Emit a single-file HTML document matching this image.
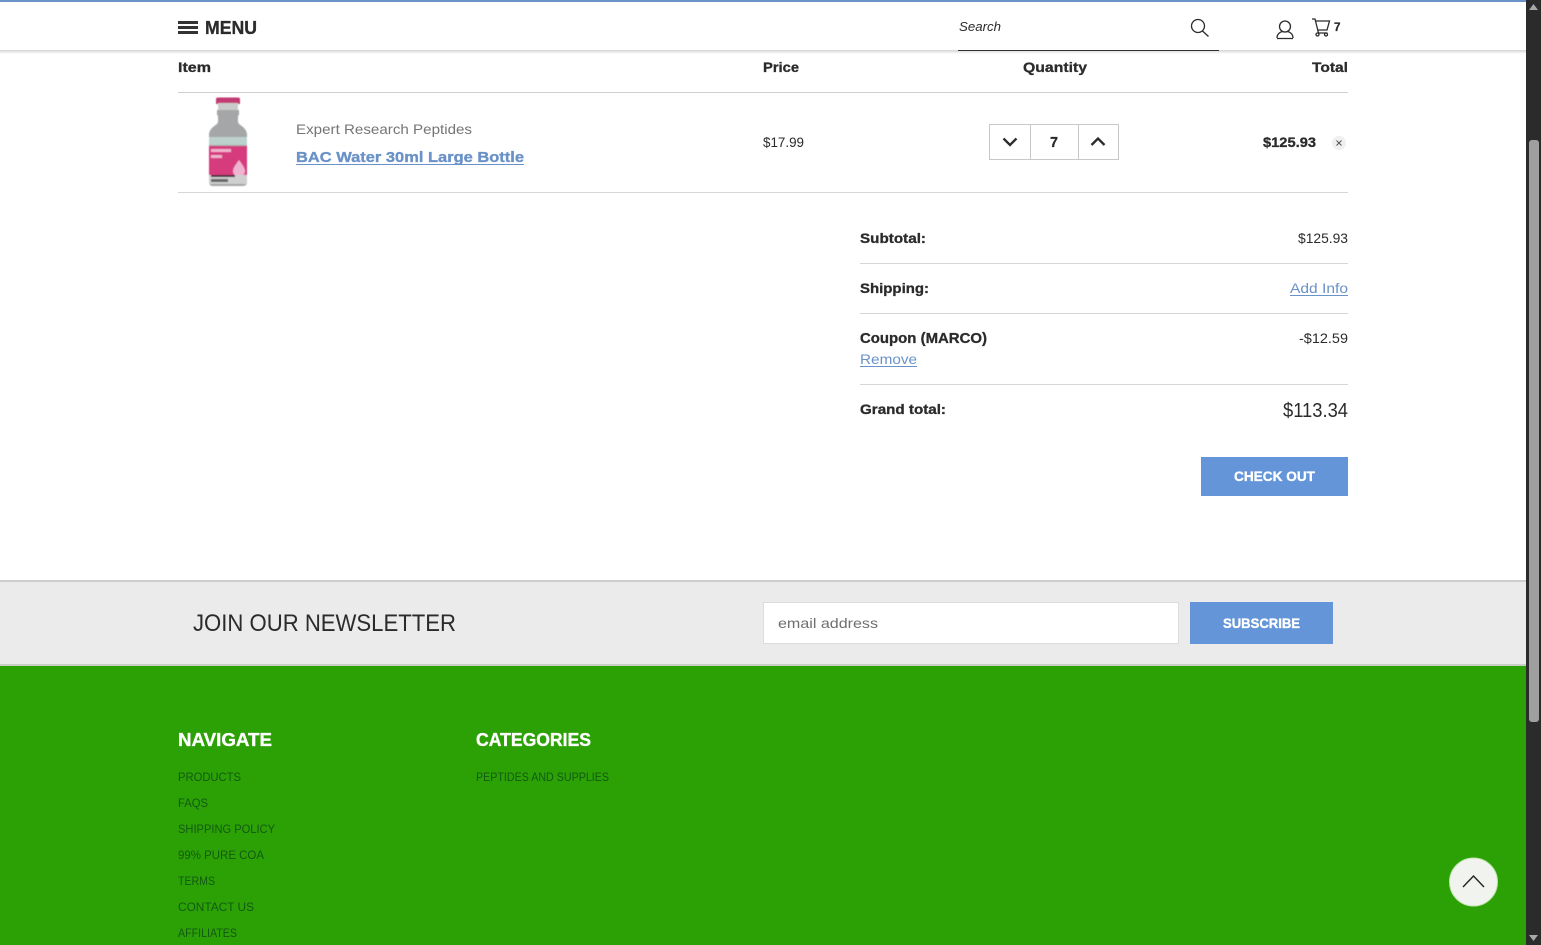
<!DOCTYPE html>
<html><head><meta charset="utf-8"><title>Cart</title>
<style>
html,body{margin:0;padding:0;background:#fff;overflow:hidden}
svg{display:block}
text{font-family:"Liberation Sans",sans-serif;fill:#2b2b2b}
.b{font-weight:700;stroke:#2b2b2b;stroke-width:.3}
.l{fill:#6a92c8}
.bl{font-weight:700;fill:#6a92c8;stroke:#6a92c8;stroke-width:.35}
.g{fill:#125a12}
.w{fill:#fff;font-weight:700;stroke:#fff;stroke-width:.35}
</style></head><body>
<svg width="1541" height="945" viewBox="0 0 1541 945" xmlns="http://www.w3.org/2000/svg">
<defs>
<linearGradient id="sh" x1="0" y1="0" x2="0" y2="1"><stop offset="0" stop-color="#d4d4d4"/><stop offset="1" stop-color="#fff"/></linearGradient>
<filter id="bl" x="-10%" y="-10%" width="120%" height="120%"><feGaussianBlur stdDeviation="0.6"/></filter>
</defs>
<rect width="1541" height="945" fill="#fff"/>
<!-- header -->
<rect x="0" y="0" width="1526" height="2" fill="#6a93c9"/>
<rect x="0" y="50" width="1526" height="4" fill="url(#sh)"/>
<rect x="178" y="21" width="20" height="3" fill="#333"/><rect x="178" y="26" width="20" height="3" fill="#333"/><rect x="178" y="31" width="20" height="3" fill="#333"/>
<text class="b" x="205" y="34" font-size="18" textLength="52" lengthAdjust="spacingAndGlyphs">MENU</text>
<text x="959" y="31" font-size="13" font-style="italic" textLength="42" lengthAdjust="spacingAndGlyphs">Search</text>
<rect x="958" y="50" width="261" height="1" fill="#333"/>
<g fill="none" stroke="#2b2b2b" stroke-width="1.300">
<circle cx="1198" cy="26" r="6.500"/><path d="M1202.500 31l6 5.500"/>
<circle cx="1285" cy="26.500" r="5.500"/><path d="M1277 38c0-4 3-6 5.500-6.500M1293 38c0-4-3-6-5.500-6.500M1277 38.500h16"/>
<path d="M1312 19h3l3.500 14h9M1315.500 21h14l-2.500 9h-9.500"/><circle cx="1317.500" cy="34.500" r="1.500"/><circle cx="1326" cy="34.500" r="1.500"/>
</g>
<text class="b" x="1334" y="31" font-size="12" textLength="6.500" lengthAdjust="spacingAndGlyphs">7</text>
<!-- table head -->
<text class="b" x="178" y="72" font-size="14" textLength="33" lengthAdjust="spacingAndGlyphs">Item</text>
<text class="b" x="763" y="72" font-size="14" textLength="36" lengthAdjust="spacingAndGlyphs">Price</text>
<text class="b" x="1023" y="72" font-size="14" textLength="64" lengthAdjust="spacingAndGlyphs">Quantity</text>
<text class="b" x="1312" y="72" font-size="14" textLength="36" lengthAdjust="spacingAndGlyphs">Total</text>
<rect x="178" y="92" width="1170" height="1" fill="#cfcfcf"/>
<rect x="178" y="192" width="1170" height="1" fill="#d6d6d6"/>
<!-- bottle -->
<g filter="url(#bl)">
<path d="M216 99q0-1.500 2-1.500h20q2 0 2 1.500v5h-24z" fill="#c33a73"/>
<rect x="218" y="103" width="20" height="7" fill="#c9cbcb"/>
<path d="M217 110h22v5l-1 1v6c0 3 9 5 9 13v47c0 3-2 4-4 4h-30c-2 0-4-1-4-4v-47c0-8 9-10 9-13v-6l-1-1z" fill="#a4a6a7"/>
<rect x="209" y="137" width="38" height="8" fill="#bcd0cc"/>
<rect x="209" y="146" width="38" height="29" fill="#d63a7e"/>
<rect x="211" y="149" width="20" height="3" fill="#eeb3cd"/>
<rect x="211" y="155" width="11" height="3" fill="#eeb3cd"/>
<path d="M239 160c3 4 6 8 6 11a6 6 0 0 1-12 0c0-3 3-7 6-11z" fill="#f0b3d0"/>
<rect x="209" y="175" width="38" height="9" fill="#cfcfcf"/>
<rect x="211" y="175" width="24" height="2" fill="#44303c"/>
<rect x="211" y="179" width="17" height="3" fill="#666"/>
</g>
<!-- item row -->
<text x="296" y="134" font-size="14" style="fill:#757575" textLength="176" lengthAdjust="spacingAndGlyphs">Expert Research Peptides</text>
<text class="bl" x="296" y="162" font-size="15" textLength="228" lengthAdjust="spacingAndGlyphs">BAC Water 30ml Large Bottle</text>
<rect x="296" y="164" width="228" height="1" fill="#6a92c8"/>
<text x="763" y="147" font-size="14" textLength="41" lengthAdjust="spacingAndGlyphs">$17.99</text>
<rect x="989.500" y="124.500" width="129" height="35" fill="#fff" stroke="#c8c8c8"/>
<path d="M1030.500 124v36M1078.500 124v36" stroke="#c8c8c8" fill="none"/>
<path d="M1003.500 138.500l6.500 6.500 6.500-6.500M1091.500 145l6.500-6.500 6.500 6.500" fill="none" stroke="#2b2b2b" stroke-width="2.300"/>
<text class="b" x="1050" y="147" font-size="15" textLength="8" lengthAdjust="spacingAndGlyphs">7</text>
<text class="b" x="1263" y="147" font-size="14" textLength="53" lengthAdjust="spacingAndGlyphs">$125.93</text>
<circle cx="1339" cy="143" r="7" fill="#f0f0f0"/>
<path d="M1336.500 140.500l5 5M1341.500 140.500l-5 5" stroke="#555" stroke-width="1" fill="none"/>
<!-- totals -->
<text class="b" x="860" y="243" font-size="14" textLength="66" lengthAdjust="spacingAndGlyphs">Subtotal:</text>
<text x="1298" y="243" font-size="14" textLength="50" lengthAdjust="spacingAndGlyphs">$125.93</text>
<rect x="860" y="263" width="488" height="1" fill="#d6d6d6"/>
<text class="b" x="860" y="293" font-size="14" textLength="69" lengthAdjust="spacingAndGlyphs">Shipping:</text>
<text class="l" x="1290" y="293" font-size="14" textLength="58" lengthAdjust="spacingAndGlyphs">Add Info</text>
<rect x="1290" y="295" width="58" height="1" fill="#6a92c8"/>
<rect x="860" y="313" width="488" height="1" fill="#d6d6d6"/>
<text class="b" x="860" y="343" font-size="14.500" textLength="127" lengthAdjust="spacingAndGlyphs">Coupon (MARCO)</text>
<text x="1299" y="343" font-size="14" textLength="49" lengthAdjust="spacingAndGlyphs">-$12.59</text>
<text class="l" x="860" y="364" font-size="14" textLength="57" lengthAdjust="spacingAndGlyphs">Remove</text>
<rect x="860" y="366" width="57" height="1" fill="#6a92c8"/>
<rect x="860" y="384" width="488" height="1" fill="#d6d6d6"/>
<text class="b" x="860" y="414" font-size="14" textLength="86" lengthAdjust="spacingAndGlyphs">Grand total:</text>
<text x="1283" y="417" font-size="20.500" textLength="65" lengthAdjust="spacingAndGlyphs">$113.34</text>
<rect x="1201" y="457" width="147" height="39" fill="#6395d8"/>
<text class="w" x="1234" y="481" font-size="14" textLength="81" lengthAdjust="spacingAndGlyphs">CHECK OUT</text>
<!-- newsletter -->
<rect x="0" y="580" width="1526" height="87" fill="#ebebeb"/>
<rect x="0" y="580" width="1526" height="2" fill="#cdcdcd"/>
<rect x="0" y="664" width="1526" height="2" fill="#c9cfc6"/>
<text x="193" y="631" font-size="24" textLength="263" lengthAdjust="spacingAndGlyphs">JOIN OUR NEWSLETTER</text>
<rect x="763.500" y="602.500" width="415" height="41" fill="#fff" stroke="#dcdcdc"/>
<text x="778" y="628" font-size="14" style="fill:#6f6f6f" textLength="100" lengthAdjust="spacingAndGlyphs">email address</text>
<rect x="1190" y="602" width="143" height="42" fill="#6395d8"/>
<text class="w" x="1223" y="628" font-size="14" textLength="77" lengthAdjust="spacingAndGlyphs">SUBSCRIBE</text>
<!-- footer -->
<rect x="0" y="666" width="1526" height="279" fill="#2ca105"/>
<text class="w" x="178" y="746" font-size="18" textLength="94" lengthAdjust="spacingAndGlyphs">NAVIGATE</text>
<text class="w" x="476" y="746" font-size="18" textLength="115" lengthAdjust="spacingAndGlyphs">CATEGORIES</text>
<text class="g" x="178" y="781" font-size="12" textLength="63" lengthAdjust="spacingAndGlyphs">PRODUCTS</text>
<text class="g" x="178" y="807" font-size="12" textLength="30" lengthAdjust="spacingAndGlyphs">FAQS</text>
<text class="g" x="178" y="833" font-size="12" textLength="97" lengthAdjust="spacingAndGlyphs">SHIPPING POLICY</text>
<text class="g" x="178" y="859" font-size="12" textLength="86" lengthAdjust="spacingAndGlyphs">99% PURE COA</text>
<text class="g" x="178" y="885" font-size="12" textLength="37" lengthAdjust="spacingAndGlyphs">TERMS</text>
<text class="g" x="178" y="911" font-size="12" textLength="76" lengthAdjust="spacingAndGlyphs">CONTACT US</text>
<text class="g" x="178" y="937" font-size="12" textLength="59" lengthAdjust="spacingAndGlyphs">AFFILIATES</text>
<text class="g" x="476" y="781" font-size="12" textLength="133" lengthAdjust="spacingAndGlyphs">PEPTIDES AND SUPPLIES</text>
<!-- back to top -->
<circle cx="1473.500" cy="882" r="24" fill="#f0f3ee" stroke="#bfe3ad" stroke-width="1"/>
<path d="M1463 887l10.500-11 10.500 11" fill="none" stroke="#222" stroke-width="1.400"/>
<!-- scrollbar -->
<rect x="1526" y="0" width="15" height="945" fill="#2b2b2b"/>
<rect x="1529" y="140" width="10" height="582" rx="3" fill="#9f9f9f"/>
<path d="M1533.500 4l4.500 6h-9zM1533.500 941l4.500-6h-9z" fill="#a8a8a8"/>
</svg>
</body></html>
